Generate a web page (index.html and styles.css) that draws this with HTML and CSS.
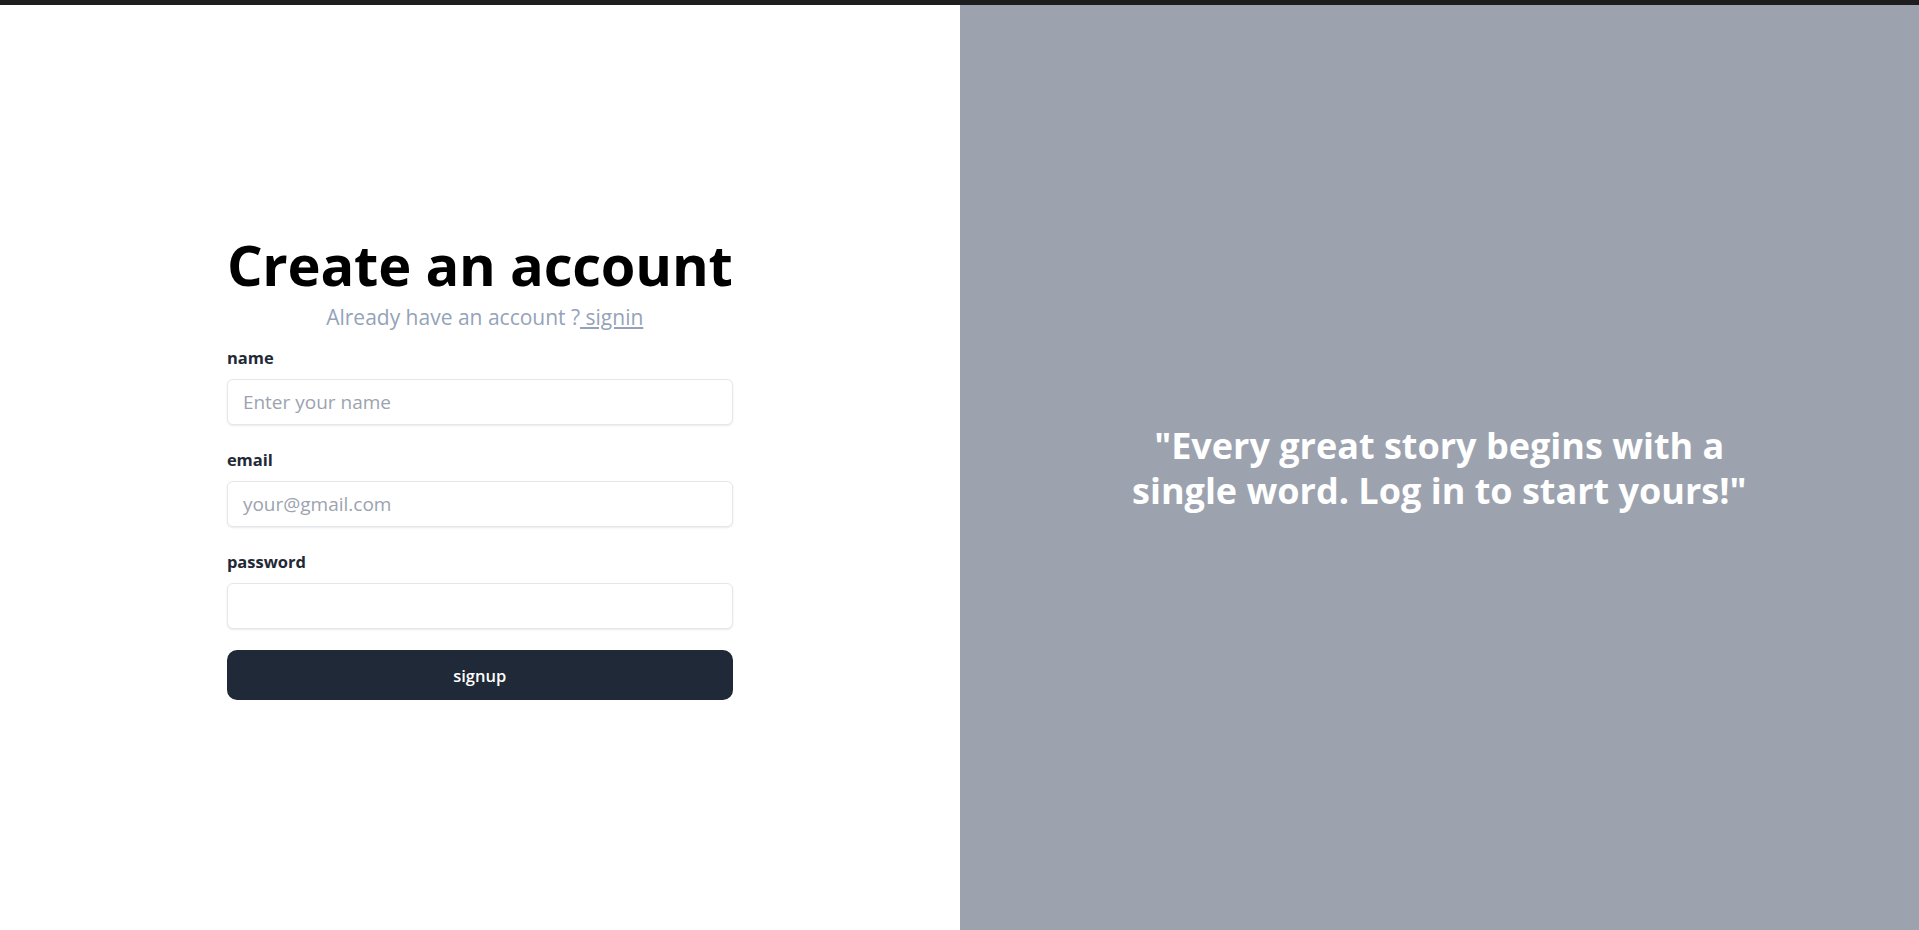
FILE: index.html
```html
<!DOCTYPE html>
<html lang="en">
<head>
<meta charset="utf-8">
<title>Create an account</title>
<link rel="stylesheet" href="styles.css">
</head>
<body>
<div class="topbar"></div>
<main class="layout">
  <section class="auth-col">
    <div class="auth-box">
      <h1 class="title">Create an account</h1>
      <div class="subtitle">Already have an account ?<a class="link" href="#"> signin</a></div>
      <form class="form">
        <div class="field">
          <label class="label" for="name">name</label>
          <input class="input" id="name" type="text" placeholder="Enter your name">
        </div>
        <div class="field">
          <label class="label" for="email">email</label>
          <input class="input" id="email" type="text" placeholder="your@gmail.com">
        </div>
        <div class="field">
          <label class="label" for="password">password</label>
          <input class="input" id="password" type="password">
        </div>
        <button class="btn" type="button">signup</button>
      </form>
    </div>
  </section>
  <section class="quote-col">
    <div class="quote">"Every great story begins with a single word. Log in to start yours!"</div>
  </section>
</main>
</body>
</html>
```
FILE: styles.css
```css
* { box-sizing: border-box; }
html, body { margin: 0; padding: 0; }
body {
  font-family: "Open Sans", "Noto Sans", sans-serif;
  background: #ffffff;
  height: 930px;
  overflow: hidden;
}
.topbar {
  height: 5px;
  background: #1e1e1e;
}
.layout {
  display: grid;
  grid-template-columns: 1fr 1fr;
  height: 925px;
}
.auth-col {
  display: flex;
  flex-direction: column;
  justify-content: center;
  align-items: center;
  background: #ffffff;
}
.auth-box {
  display: flex;
  flex-direction: column;
}
.title {
  margin: 0;
  font-size: 56px;
  line-height: 58px;
  font-weight: 700;
  color: #000000;
  letter-spacing: -0.2px;
}
.subtitle {
  margin-top: 10px;
  padding-left: 10px;
  text-align: center;
  font-size: 21px;
  line-height: 28px;
  color: #94a3b8;
}
.link {
  color: #94a3b8;
  text-decoration: underline;
}
.form {
  margin-top: 14px;
  display: flex;
  flex-direction: column;
}
.field + .field { margin-top: 22px; }
.label {
  display: block;
  font-size: 16.5px;
  line-height: 25px;
  font-weight: 700;
  color: #1f2937;
  margin-bottom: 9px;
}
.input {
  display: block;
  width: 100%;
  height: 46px;
  padding: 0 15px;
  border: 1px solid #e5e7eb;
  border-radius: 6px;
  box-shadow: 0 1px 2px rgba(0,0,0,0.09);
  font-family: inherit;
  font-size: 19px;
  color: #111827;
  background: #ffffff;
  outline: none;
}
.input::placeholder { color: #9ca3af; }
.btn {
  margin-top: 21px;
  height: 50px;
  width: 100%;
  border: none;
  border-radius: 10px;
  background: #1f2937;
  color: #ffffff;
  font-family: inherit;
  font-size: 16.5px;
  font-weight: 600;
  cursor: pointer;
}
.quote-col {
  display: flex;
  justify-content: center;
  align-items: center;
  background: #9ca3af;
}
.quote {
  max-width: 640px;
  text-align: center;
  color: #ffffff;
  font-size: 36px;
  line-height: 45px;
  font-weight: 700;
}
```
